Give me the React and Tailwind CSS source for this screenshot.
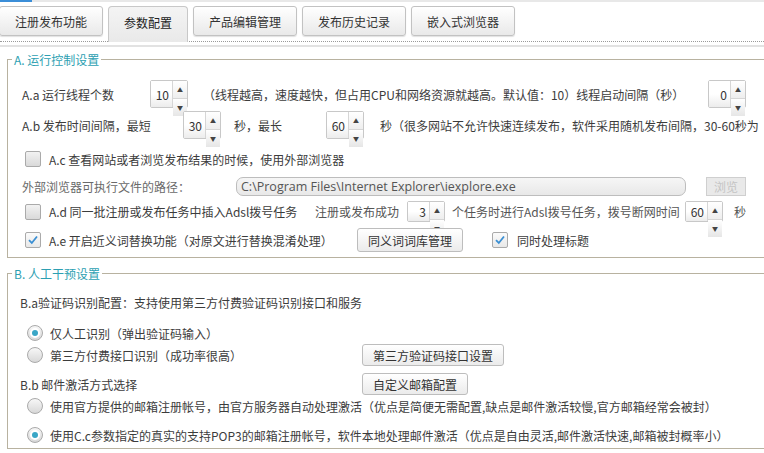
import React from "react";

function Spin({ v, cls }) {
  return (
    <div className={`flex shrink-0 border border-[#c8c8c8] rounded-[2px] bg-white ${cls}`}>
      <div className="flex-1 flex items-center justify-end pr-[3px] text-[12px] text-[#333] bg-gradient-to-b from-white via-white to-[#ececec]">{v}</div>
      <div className="w-[15px] flex flex-col border-l border-[#d6d6d6]">
        <div className="flex-1 flex items-center justify-center text-[6px] text-[#444] bg-gradient-to-b from-white to-[#eeeeee] border-b border-[#d6d6d6]">▲</div>
        <div className="flex-1 flex items-center justify-center text-[6px] text-[#444] bg-gradient-to-b from-white to-[#e6e6e6]">▼</div>
      </div>
    </div>
  );
}

function Check({ on }) {
  return (
    <div className={`w-[16px] h-[16px] shrink-0 border border-[#aaaaaa] rounded-[2px] flex items-center justify-center ${on ? "bg-gradient-to-b from-[#fbfbfb] to-[#e8e8e8]" : "bg-gradient-to-b from-[#f2f2f2] to-[#d9d9d9]"}`}>
      {on && (
        <svg width="12" height="12" viewBox="0 0 12 12">
          <path d="M2 6.2 L4.8 9 L10 2.5" fill="none" stroke="#3b8fd3" strokeWidth="1.8" />
        </svg>
      )}
    </div>
  );
}

function Radio({ on }) {
  return (
    <div className="w-[16px] h-[16px] shrink-0 rounded-full border border-[#aaaaaa] bg-gradient-to-b from-[#f7f7f7] to-[#d8d8d8] flex items-center justify-center">
      {on && <div className="w-[6px] h-[6px] rounded-full bg-[#39a6c6] ring-2 ring-white"></div>}
    </div>
  );
}

function Btn({ children, cls }) {
  return (
    <div className={`shrink-0 flex items-center justify-center border border-[#bdbdbd] rounded-[3px] bg-gradient-to-b from-white to-[#ebebeb] text-[12px] text-[#333] ${cls}`}>
      {children}
    </div>
  );
}

function Tab({ children, active }) {
  if (active)
    return (
      <div className="h-[36px] px-[15px] flex items-start pt-[7px] border border-b-0 border-[#c8c8c8] rounded-t-[4px] bg-gradient-to-b from-[#f4f4f4] to-[#e9e9e9] text-[12px] text-[#222]">
        {children}
      </div>
    );
  return (
    <div className="h-[30px] px-[15px] flex items-center border border-[#c2c2c2] rounded-[3px] bg-gradient-to-b from-white to-[#e9e9e9] shadow-[0_1px_1px_rgba(0,0,0,0.12)] text-[12px] text-[#333]">
      {children}
    </div>
  );
}

export default function App() {
  return (
    <div className="w-[764px] h-[453px] overflow-hidden bg-white relative whitespace-nowrap text-[12px] text-[#3c3c3c] font-['Noto_Sans_CJK_SC','Microsoft_YaHei',sans-serif] leading-[17px]">
      {/* header */}
      <div className="h-[2px] bg-[#e8e8e8] flex">
        <div className="w-[32px] bg-[#3b8ed8]"></div>
      </div>
      <div className="relative h-[39px]">
        <div className="flex items-start gap-[5px] pt-[4px] -ml-[1px]">
          <Tab>注册发布功能</Tab>
          <Tab active>参数配置</Tab>
          <Tab>产品编辑管理</Tab>
          <Tab>发布历史记录</Tab>
          <Tab>嵌入式浏览器</Tab>
        </div>
      </div>
      <div className="border-t border-dotted border-[#9a9a9a]"></div>
      <div className="mt-[3px] h-[2px] bg-[#e2e2e2]"></div>

      {/* Section A */}
      <div className="mt-[12px] ml-[7px] w-[800px] border border-[#b8b2a0] pl-[14px] pb-[5px]">
        <div className="-mt-[9px] -ml-[10px] w-fit px-[2px] bg-white text-[#2d9fb2] h-[17px] leading-[17px]">A. 运行控制设置</div>

        <div className="mt-[12px] h-[28px] flex items-center">
          <div className="w-[128px]">A.a 运行线程个数</div>
          <Spin v="10" cls="w-[38px] h-[28px]" />
          <div className="ml-[15px] w-[505px]">（线程越高，速度越快，但占用CPU和网络资源就越高。默认值：10）线程启动间隔（秒）</div>
          <Spin v="0" cls="w-[38px] h-[28px]" />
        </div>

        <div className="mt-[3px] h-[28px] flex items-center">
          <div className="w-[161px]">A.b 发布时间间隔，最短</div>
          <Spin v="30" cls="w-[38px] h-[28px]" />
          <div className="ml-[13px] w-[92px]">秒，最长</div>
          <Spin v="60" cls="w-[38px] h-[28px]" />
          <div className="ml-[16px]">秒（很多网站不允许快速连续发布，软件采用随机发布间隔，30-60秒为</div>
        </div>

        <div className="mt-[10px] h-[20px] flex items-center pl-[3px]">
          <Check />
          <div className="ml-[8px]">A.c 查看网站或者浏览发布结果的时候，使用外部浏览器</div>
        </div>

        <div className="mt-[7px] h-[20px] flex items-center">
          <div className="w-[214px] text-[#6a6a6a]">外部浏览器可执行文件的路径：</div>
          <div className="w-[450px] h-[19px] rounded-[7px] border border-[#bdbdbd] bg-gradient-to-b from-[#f6f6f6] to-[#e8e8e8] flex items-center pl-[4px] text-[12.5px] text-[#555] font-['Open_Sans',sans-serif] overflow-hidden">
            C:\Program Files\Internet Explorer\iexplore.exe
          </div>
          <div className="ml-[20px] w-[40px] h-[19px] border border-[#cfcfcf] bg-[#e9e9e9] flex items-center justify-center text-[#c4c4c4]">浏览</div>
        </div>

        <div className="mt-[5px] h-[21px] flex items-center pl-[3px]">
          <Check />
          <div className="ml-[8px] w-[266px]">A.d 同一批注册或发布任务中插入Adsl拨号任务</div>
          <div className="w-[92px] text-[#555]">注册或发布成功</div>
          <Spin v="3" cls="w-[38px] h-[21px]" />
          <div className="ml-[7px] w-[233px] text-[#555]">个任务时进行Adsl拨号任务，拨号断网时间</div>
          <Spin v="60" cls="w-[38px] h-[21px]" />
          <div className="ml-[11px] text-[#555]">秒</div>
        </div>

        <div className="mt-[6px] h-[24px] flex items-center pl-[3px]">
          <Check on />
          <div className="ml-[8px] w-[308px]">A.e 开启近义词替换功能（对原文进行替换混淆处理）</div>
          <Btn cls="w-[106px] h-[24px]">同义词词库管理</Btn>
          <div className="ml-[29px]"><Check on /></div>
          <div className="ml-[9px]">同时处理标题</div>
        </div>
      </div>

      {/* Section B */}
      <div className="mt-[15px] ml-[7px] w-[800px] border border-[#b8b2a0] pl-[12px] pb-[3px]">
        <div className="-mt-[9px] -ml-[8px] w-fit px-[2px] bg-white text-[#2d9fb2] h-[17px] leading-[17px]">B. 人工干预设置</div>

        <div className="mt-[10px] h-[20px] flex items-center">B.a验证码识别配置：支持使用第三方付费验证码识别接口和服务</div>

        <div className="mt-[11px] h-[20px] flex items-center pl-[7px]">
          <Radio on />
          <div className="ml-[7px]">仅人工识别（弹出验证码输入）</div>
        </div>

        <div className="mt-[1px] h-[22px] flex items-center pl-[7px]">
          <Radio />
          <div className="ml-[7px] w-[312px]">第三方付费接口识别（成功率很高）</div>
          <Btn cls="w-[142px] h-[22px]">第三方验证码接口设置</Btn>
        </div>

        <div className="mt-[7px] h-[22px] flex items-center">
          <div className="w-[342px]">B.b 邮件激活方式选择</div>
          <Btn cls="w-[106px] h-[22px]">自定义邮箱配置</Btn>
        </div>

        <div className="mt-[1px] h-[20px] flex items-center pl-[7px]">
          <Radio />
          <div className="ml-[7px]">使用官方提供的邮箱注册帐号，由官方服务器自动处理激活（优点是简便无需配置,缺点是邮件激活较慢,官方邮箱经常会被封）</div>
        </div>

        <div className="mt-[9px] h-[20px] flex items-center pl-[7px]">
          <Radio on />
          <div className="ml-[7px]">使用C.c参数指定的真实的支持POP3的邮箱注册帐号，软件本地处理邮件激活（优点是自由灵活,邮件激活快速,邮箱被封概率小）</div>
        </div>
      </div>
    </div>
  );
}
